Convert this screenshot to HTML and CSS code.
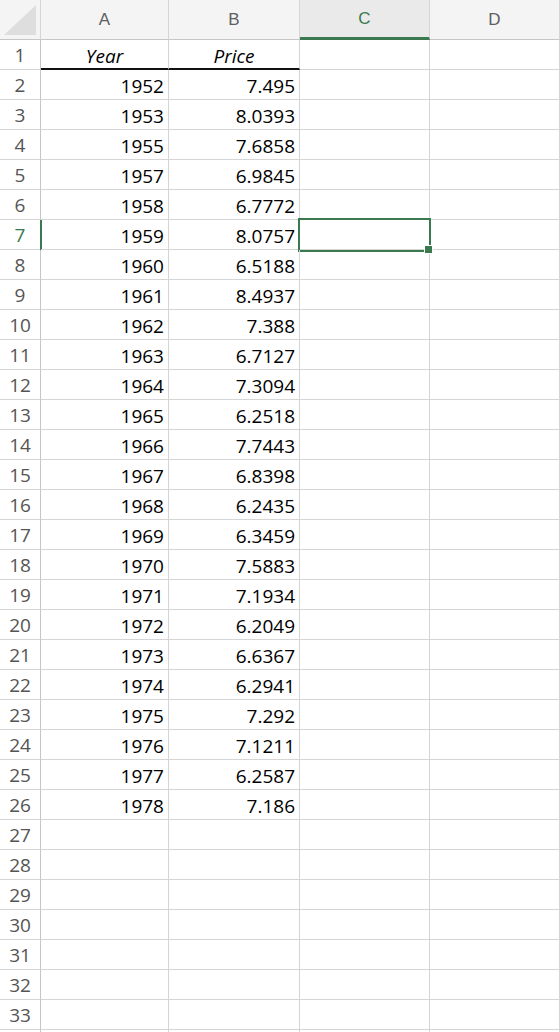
FILE: index.html
```html
<!DOCTYPE html>
<html>
<head>
<meta charset="UTF-8">
<meta name="viewport" content="width=device-width, initial-scale=1">
<title>Sheet1</title>
<link rel="stylesheet" href="styles.css">
</head>
<body>

<div class="sheet">
  <!-- column headers -->
  <div class="corner">
    <svg width="40" height="39" viewBox="0 0 40 39"><polygon points="36,5 36,35 4,35" fill="#dedede"/></svg>
  </div>
  <div class="colhead">A</div>
  <div class="colhead">B</div>
  <div class="colhead active">C</div>
  <div class="colhead">D</div>

  <div class="rowhead">1</div><div class="cell title">Year</div><div class="cell title">Price</div><div class="cell"></div><div class="cell"></div>
  <div class="rowhead">2</div><div class="cell">1952</div><div class="cell">7.495</div><div class="cell"></div><div class="cell"></div>
  <div class="rowhead">3</div><div class="cell">1953</div><div class="cell">8.0393</div><div class="cell"></div><div class="cell"></div>
  <div class="rowhead">4</div><div class="cell">1955</div><div class="cell">7.6858</div><div class="cell"></div><div class="cell"></div>
  <div class="rowhead">5</div><div class="cell">1957</div><div class="cell">6.9845</div><div class="cell"></div><div class="cell"></div>
  <div class="rowhead">6</div><div class="cell">1958</div><div class="cell">6.7772</div><div class="cell"></div><div class="cell"></div>
  <div class="rowhead active">7</div><div class="cell">1959</div><div class="cell">8.0757</div><div class="cell selected"></div><div class="cell"></div>
  <div class="rowhead">8</div><div class="cell">1960</div><div class="cell">6.5188</div><div class="cell"></div><div class="cell"></div>
  <div class="rowhead">9</div><div class="cell">1961</div><div class="cell">8.4937</div><div class="cell"></div><div class="cell"></div>
  <div class="rowhead">10</div><div class="cell">1962</div><div class="cell">7.388</div><div class="cell"></div><div class="cell"></div>
  <div class="rowhead">11</div><div class="cell">1963</div><div class="cell">6.7127</div><div class="cell"></div><div class="cell"></div>
  <div class="rowhead">12</div><div class="cell">1964</div><div class="cell">7.3094</div><div class="cell"></div><div class="cell"></div>
  <div class="rowhead">13</div><div class="cell">1965</div><div class="cell">6.2518</div><div class="cell"></div><div class="cell"></div>
  <div class="rowhead">14</div><div class="cell">1966</div><div class="cell">7.7443</div><div class="cell"></div><div class="cell"></div>
  <div class="rowhead">15</div><div class="cell">1967</div><div class="cell">6.8398</div><div class="cell"></div><div class="cell"></div>
  <div class="rowhead">16</div><div class="cell">1968</div><div class="cell">6.2435</div><div class="cell"></div><div class="cell"></div>
  <div class="rowhead">17</div><div class="cell">1969</div><div class="cell">6.3459</div><div class="cell"></div><div class="cell"></div>
  <div class="rowhead">18</div><div class="cell">1970</div><div class="cell">7.5883</div><div class="cell"></div><div class="cell"></div>
  <div class="rowhead">19</div><div class="cell">1971</div><div class="cell">7.1934</div><div class="cell"></div><div class="cell"></div>
  <div class="rowhead">20</div><div class="cell">1972</div><div class="cell">6.2049</div><div class="cell"></div><div class="cell"></div>
  <div class="rowhead">21</div><div class="cell">1973</div><div class="cell">6.6367</div><div class="cell"></div><div class="cell"></div>
  <div class="rowhead">22</div><div class="cell">1974</div><div class="cell">6.2941</div><div class="cell"></div><div class="cell"></div>
  <div class="rowhead">23</div><div class="cell">1975</div><div class="cell">7.292</div><div class="cell"></div><div class="cell"></div>
  <div class="rowhead">24</div><div class="cell">1976</div><div class="cell">7.1211</div><div class="cell"></div><div class="cell"></div>
  <div class="rowhead">25</div><div class="cell">1977</div><div class="cell">6.2587</div><div class="cell"></div><div class="cell"></div>
  <div class="rowhead">26</div><div class="cell">1978</div><div class="cell">7.186</div><div class="cell"></div><div class="cell"></div>
  <div class="rowhead">27</div><div class="cell"></div><div class="cell"></div><div class="cell"></div><div class="cell"></div>
  <div class="rowhead">28</div><div class="cell"></div><div class="cell"></div><div class="cell"></div><div class="cell"></div>
  <div class="rowhead">29</div><div class="cell"></div><div class="cell"></div><div class="cell"></div><div class="cell"></div>
  <div class="rowhead">30</div><div class="cell"></div><div class="cell"></div><div class="cell"></div><div class="cell"></div>
  <div class="rowhead">31</div><div class="cell"></div><div class="cell"></div><div class="cell"></div><div class="cell"></div>
  <div class="rowhead">32</div><div class="cell"></div><div class="cell"></div><div class="cell"></div><div class="cell"></div>
  <div class="rowhead">33</div><div class="cell"></div><div class="cell"></div><div class="cell"></div><div class="cell"></div>
  <div class="rowhead"></div><div class="cell"></div><div class="cell"></div><div class="cell"></div><div class="cell"></div>
</div>

</body>
</html>
```

FILE: styles.css
```css
html, body {
  margin: 0;
  padding: 0;
  background: #fff;
  overflow: hidden;
}

.sheet {
  display: grid;
  grid-template-columns: 41px 128px 131px 130px 130px;
  grid-template-rows: 40px;
  grid-auto-rows: 30px;
  font-family: "Open Sans", "Liberation Sans", sans-serif;
}

.sheet > div {
  box-sizing: border-box;
  border-right: 1px solid #d5d5d5;
  border-bottom: 1px solid #d5d5d5;
}

/* header strip */
.corner,
.colhead {
  background: #f4f4f4;
  border-bottom-color: #c6c6c6 !important;
}

.corner svg {display: block;}

.colhead {
  text-align: center;
  font-family: "Liberation Sans", Arial, sans-serif;
  font-size: 17px;
  line-height: 40px;
  color: #5f5f5f;
}

.colhead.active {
  background: #eaeaea;
  color: #3b7a50;
  border-bottom: 3px solid #3b7a50 !important;
  line-height: 38px;
}

.rowhead {
  position: relative;
  text-align: center;
  font-size: 19px;
  line-height: 27px;
  padding-top: 2px;
  color: #555;
  border-right-color: #c6c6c6 !important;
}

.rowhead.active {color: #3b7a50;}

.rowhead.active:after {
  content: "";
  position: absolute;
  top: 0;
  bottom: -1px;
  right: -2px;
  width: 2px;
  background: #3b7a50;
}

/* data cells */
.cell {
  position: relative;
  text-align: right;
  padding: 3px 4px 0 4px;
  font-size: 19px;
  line-height: 27px;
  color: #000;
}

.cell.title {
  text-align: center;
  font-style: italic;
  border-bottom: 2px solid #111 !important;
}

/* selected cell outline + fill handle */
.cell.selected:after {
  content: "";
  position: absolute;
  left: -2px;
  top: -2px;
  right: -2px;
  bottom: -3px;
  border: 2px solid #3b7a50;
}

.cell.selected:before {
  content: "";
  position: absolute;
  right: -4px;
  bottom: -5px;
  width: 7px;
  height: 7px;
  background: #3b7a50;
  border: 1px solid #fff;
  z-index: 2;
}
```
